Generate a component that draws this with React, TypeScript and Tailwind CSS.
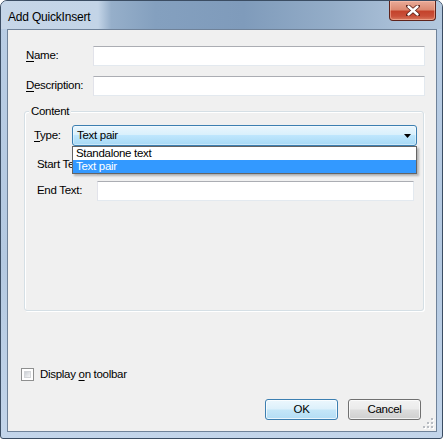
import React from "react";

function Input({ className = "" }: { className?: string }) {
  return (
    <div
      className={
        "h-[20px] bg-white border border-[#e3e9ef] border-t-[#abadb3] border-l-[#e2e3ea] " +
        className
      }
    />
  );
}

export default function App() {
  return (
    <div className="w-[443px] h-[439px] font-['Liberation_Sans',Arial,sans-serif] text-[11.5px] tracking-[-0.3px] text-black">
      <div className="w-[443px] h-[439px] rounded-t-[7px] rounded-b-[3px] border border-[#3b4d63] bg-[linear-gradient(180deg,#b9cde4,#b4c9e1_60%,#c3d5ea)] flex flex-col overflow-hidden">
        {/* Title bar */}
        <div className="h-[28px] flex justify-between bg-[linear-gradient(90deg,#c6d6e8_0%,#c3d4e7_22%,#96afca_25%,#84a0bf_35%,#7f9bbb_55%,#94adc8_75%,#a9bfd7_90%,#b3c8de_100%)]">
          <div className="pl-[7px] pt-[7px] text-[12px] tracking-[-0.2px] text-black">
            Add QuickInsert
          </div>
          <div className="mr-[6px] w-[47px] h-[20px] rounded-b-[4px] border border-[#5e231b] border-t-0 bg-[linear-gradient(180deg,#e9ab98_0%,#dc8a72_45%,#c4432c_55%,#c9503a_80%,#d97a5f_100%)] shadow-[inset_0_0_0_1px_rgba(255,200,180,0.5)] flex items-center justify-center">
            <svg width="14" height="11" viewBox="0 0 14 11">
              <path
                d="M2 1 L12 10 M12 1 L2 10"
                stroke="#5a2018"
                strokeWidth="4"
                strokeLinecap="round"
              />
              <path
                d="M2.5 1.5 L11.5 9.5 M11.5 1.5 L2.5 9.5"
                stroke="#ffffff"
                strokeWidth="2.4"
                strokeLinecap="round"
              />
            </svg>
          </div>
        </div>

        {/* Client area */}
        <div className="relative ml-[6px] mr-[5px] mb-[6px] flex-1 border border-[#6f8299] bg-[#f0f0f0] flex flex-col">
          {/* Name */}
          <div className="mt-[16px] flex items-center pl-[18px] mr-[11px]">
            <div className="w-[67px]">
              <span className="underline underline-offset-[2px]">N</span>ame:
            </div>
            <Input className="flex-1" />
          </div>
          {/* Description */}
          <div className="mt-[10px] flex items-center pl-[18px] mr-[11px]">
            <div className="w-[67px]">
              <span className="underline underline-offset-[2px]">D</span>escription:
            </div>
            <Input className="flex-1" />
          </div>

          {/* Group box */}
          <div className="relative mt-[15px] ml-[16px] mr-[12px] h-[200px] rounded-[3px] border border-[#d5dfe5] shadow-[inset_1px_1px_0_#ffffff,1px_1px_0_#ffffff] flex flex-col">
            <span className="absolute left-[4px] top-[-8px] px-[2px] bg-[#f0f0f0] leading-[14px]">
              Content
            </span>

            {/* Type */}
            <div className="mt-[13px] flex items-center pl-[9px] mr-[6px]">
              <div className="w-[38px]">
                <span className="underline underline-offset-[2px]">T</span>ype:
              </div>
              <div className="relative flex-1">
                <div className="h-[21px] rounded-[3px] border border-[#3c7fb1] bg-[linear-gradient(180deg,#eaf6fd_0%,#d9f0fc_45%,#bee6fd_50%,#a7d9f5_100%)] shadow-[inset_0_0_0_1px_rgba(255,255,255,0.4)] flex items-center justify-between pl-[4px] pr-[5px]">
                  <span>Text pair</span>
                  <svg width="7" height="4" viewBox="0 0 7 4">
                    <path d="M0 0 H7 L3.5 4 Z" fill="#000" />
                  </svg>
                </div>
                {/* Dropdown list */}
                <div className="absolute left-0 right-0 top-[21px] z-10 bg-white border border-[#646464] shadow-[2px_2px_2px_rgba(0,0,0,0.25)] flex flex-col py-0">
                  <div className="h-[13px] leading-[13px] pl-[3px]">Standalone text</div>
                  <div className="h-[13px] leading-[13px] pl-[3px] bg-[#3399ff] text-white">
                    Text pair
                  </div>
                </div>
              </div>
            </div>

            {/* Start Text */}
            <div className="mt-[9px] flex items-center pl-[12px] mr-[9px]">
              <div className="w-[60px] overflow-hidden whitespace-nowrap">Start Text:</div>
              <Input className="flex-1" />
            </div>
            {/* End Text */}
            <div className="mt-[6px] flex items-center pl-[12px] mr-[9px]">
              <div className="w-[60px]">End Text:</div>
              <Input className="flex-1" />
            </div>
          </div>

          {/* Checkbox */}
          <div className="mt-[57px] ml-[13px] flex items-center gap-[6px] h-[13px]">
            <div className="w-[13px] h-[13px] border border-[#8e8f8f] bg-white p-[2px]">
              <div className="w-full h-full bg-[linear-gradient(135deg,#cbcfd5,#f6f6f6)] border border-[#d4d6d9]" />
            </div>
            <span>
              Display <span className="underline underline-offset-[2px]">o</span>n toolbar
            </span>
          </div>

          {/* Buttons */}
          <div className="mt-[18px] mr-[15px] flex justify-end gap-[10px]">
            <div className="w-[73px] h-[21px] rounded-[3px] border border-[#3c7fb1] bg-[linear-gradient(180deg,#ecf7fd_0%,#dcf0fb_48%,#c4e6f8_52%,#b3ddf5_100%)] shadow-[inset_0_0_0_1px_rgba(255,255,255,0.7)] flex items-center justify-center">
              OK
            </div>
            <div className="w-[73px] h-[21px] rounded-[3px] border border-[#707070] bg-[linear-gradient(180deg,#f2f2f2_0%,#ebebeb_48%,#dddddd_52%,#cfcfcf_100%)] shadow-[inset_0_0_0_1px_rgba(255,255,255,0.7)] flex items-center justify-center">
              Cancel
            </div>
          </div>

          {/* Size grip */}
          <svg
            className="absolute right-[2px] bottom-[2px]"
            width="11"
            height="11"
            viewBox="0 0 11 11"
          >
            {[
              [8, 0],
              [8, 4],
              [4, 4],
              [8, 8],
              [4, 8],
              [0, 8],
            ].map(([x, y], i) => (
              <g key={i}>
                <rect x={x + 1} y={y + 1} width="2" height="2" fill="#ffffff" />
                <rect x={x} y={y} width="2" height="2" fill="#b8bcc2" />
              </g>
            ))}
          </svg>
        </div>
      </div>
    </div>
  );
}
